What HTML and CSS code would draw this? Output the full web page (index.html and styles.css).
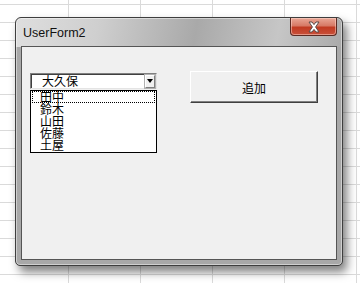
FILE: index.html
```html
<!DOCTYPE html>
<html lang="ja">
<head>
  <meta charset="UTF-8">
  <meta name="viewport" content="width=device-width, initial-scale=1.0">
  <title>UserForm2</title>
  <link rel="stylesheet" href="styles.css">
</head>
<body>
  <div class="sheet">
    <div class="userform">
      <div class="titlebar">
        <span class="title">UserForm2</span>
        <button class="close-btn" aria-label="閉じる">
          <svg viewBox="0 0 14 12" width="14" height="12">
            <path d="M2 1h3l2 2.6L9 1h3L8.6 6 12 11H9L7 8.4 5 11H2l3.4-5z" fill="#fff" stroke="#5a4a48" stroke-width="1" stroke-linejoin="round"/>
          </svg>
        </button>
      </div>
      <div class="client">
        <div class="name-picker">
          <div class="combo">
            <span class="combo-text">大久保</span>
            <span class="combo-btn"><span class="arrow"></span></span>
          </div>
          <ul class="listbox">
            <li class="focused">田中</li>
            <li>鈴木</li>
            <li>山田</li>
            <li>佐藤</li>
            <li>土屋</li>
          </ul>
        </div>
        <button class="cmd-btn">追加</button>
      </div>
    </div>
  </div>
</body>
</html>
```

FILE: styles.css
```css
*, *::before, *::after { box-sizing: border-box; }
html, body { margin: 0; padding: 0; }
body {
  width: 360px;
  height: 283px;
  overflow: hidden;
  font-family: "Noto Sans CJK JP", "Liberation Sans", sans-serif;
  color: #000;
}

/* 背景のシート */
.sheet {
  width: 360px;
  height: 283px;
  padding: 17px 0 0 15px;
  background-color: #fff;
  background-image:
    linear-gradient(to right, #dadada 1px, transparent 1px),
    linear-gradient(to bottom, #dadada 1px, transparent 1px);
  background-size: 72px 18px;
  background-position: -4px 4px;
}

/* フォームの枠 */
.userform {
  width: 328px;
  height: 249px;
  display: flex;
  flex-direction: column;
  padding: 0 5px 5px;
  border: 1px solid #3e3e3e;
  border-radius: 6px 6px 5px 5px;
  background:
    linear-gradient(100deg, #dedede 0%, #cfcfcf 25%, #a9a9a9 55%, #bdbdbd 72%, #c6c6c6 80%, #aaaaaa 100%) top / 100% 29px no-repeat,
    #a8a8a8;
  box-shadow: inset 0 0 0 1px rgba(255,255,255,0.45), 4px 6px 10px rgba(0,0,0,0.5);
}
.titlebar { height: 28px; display: flex; justify-content: space-between; align-items: flex-start; }
.title { font-family: "Liberation Sans", sans-serif; font-size: 12.5px; color: #111; padding: 8px 0 0 2px; }
.close-btn {
  width: 47px;
  height: 18px;
  margin: 0;
  padding: 0;
  display: flex;
  align-items: center;
  justify-content: center;
  border: 1px solid #5b2a22;
  border-top: 0;
  border-radius: 0 0 4px 4px;
  background: linear-gradient(to bottom, #e9a796 0%, #d77a66 45%, #c13b22 55%, #c8503a 100%);
  box-shadow: inset 0 0 0 1px rgba(255,220,210,0.5);
}

/* クライアント領域 */
.client {
  flex: 1;
  display: flex;
  align-items: flex-start;
  padding: 24px 0 0 8px;
  border: 1px solid #555;
  background-color: #f0f0f0;
}
.name-picker { width: 127px; padding-top: 2px; }

/* コンボボックス */
.combo {
  height: 16px;
  display: flex;
  align-items: center;
  border: 1px solid;
  border-color: #808080 #e4e4e4 #e4e4e4 #808080;
  box-shadow: inset 1px 1px 0 #404040;
  background-color: #fff;
  padding: 1px 1px 1px 11px;
}
.combo-text { flex: 1; font-size: 12px; line-height: 12px; }
.combo-btn {
  width: 10px;
  height: 13px;
  display: flex;
  align-items: center;
  justify-content: center;
  background-color: #f0f0f0;
  border: 1px solid;
  border-color: #fff #808080 #808080 #fff;
  box-shadow: 0 0 0 1px #b0b0b0;
}
.arrow { width: 0; height: 0; border-left: 3.5px solid transparent; border-right: 3.5px solid transparent; border-top: 4px solid #000; }

/* リストボックス */
.listbox {
  list-style: none;
  margin: 1px 0 0;
  padding: 0 0 1px;
  border: 1px solid #000;
  background-color: #fff;
}
.listbox li { height: 12px; font-size: 12px; line-height: 12px; padding-left: 9px; }
.listbox li.focused { outline: 1px dotted #000; outline-offset: -1px; margin: 0 1px; padding-left: 8px; }

/* コマンドボタン */
.cmd-btn {
  width: 128px;
  height: 32px;
  margin: 0 0 0 33px;
  padding: 0;
  font-family: "Noto Sans CJK JP", sans-serif;
  font-size: 12px;
  color: #000;
  background-color: #f0f0f0;
  border: 1px solid;
  border-color: #fff #404040 #404040 #fff;
  box-shadow: inset -1px -1px 0 #808080;
}
```
